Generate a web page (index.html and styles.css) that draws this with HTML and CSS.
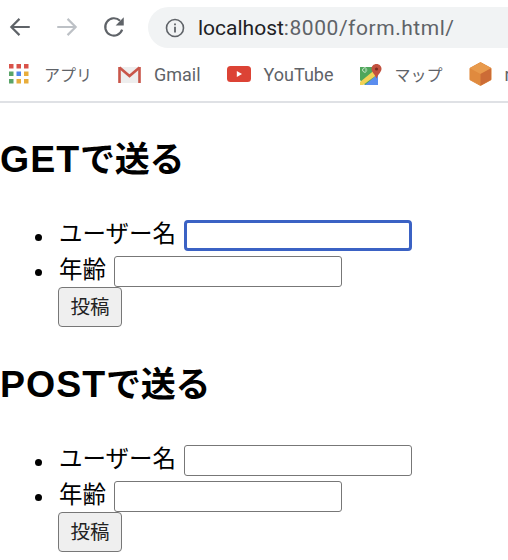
FILE: index.html
```html
<!DOCTYPE html>
<html lang="ja">
<head>
  <meta charset="UTF-8" />
  <title>form</title>
  <link rel="stylesheet" href="styles.css">
</head>
<body>
  <div class="browser-bar">
    <div class="nav-row">
      <svg class="nav-icon" viewBox="0 0 24 24"><path d="M21 12H4M11.500 4.500 4 12l7.500 7.500" fill="none" stroke="#5f6368" stroke-width="2"/></svg>
      <svg class="nav-icon" viewBox="0 0 24 24"><path d="M3 12h17M12.500 4.500 20 12l-7.500 7.500" fill="none" stroke="#bdc1c6" stroke-width="2"/></svg>
      <svg class="nav-icon" viewBox="0 0 24 24"><path d="M19.500 14.500A8 8 0 1 1 17.600 6.300" fill="none" stroke="#5f6368" stroke-width="2"/><path d="M21 3v7.500h-7.500z" fill="#5f6368"/></svg>
      <div class="address-bar">
        <svg class="info-icon" viewBox="0 0 20 20"><circle cx="10" cy="10" r="8.500" fill="none" stroke="#5f6368" stroke-width="1.600"/><path d="M9.100 5.500h1.800v1.800H9.100zM9.100 8.800h1.800v5.800H9.100z" fill="#5f6368"/></svg>
        <span class="host">localhost</span><span class="url-rest">:8000/form.html/</span>
      </div>
    </div>
    <div class="bookmarks">
      <div class="bookmark">
        <svg class="bm-icon apps" viewBox="0 0 22 20">
          <rect x="0" y="0" width="4.500" height="4.500" fill="#d9534a"/><rect x="7.500" y="0" width="4.500" height="4.500" fill="#d9534a"/><rect x="15" y="0" width="4.500" height="4.500" fill="#d9534a"/>
          <rect x="0" y="7.500" width="4.500" height="4.500" fill="#5aa469"/><rect x="7.500" y="7.500" width="4.500" height="4.500" fill="#4f86ec"/><rect x="15" y="7.500" width="4.500" height="4.500" fill="#e8ad3c"/>
          <rect x="0" y="15" width="4.500" height="4.500" fill="#5aa469"/><rect x="7.500" y="15" width="4.500" height="4.500" fill="#e8ad3c"/><rect x="15" y="15" width="4.500" height="4.500" fill="#e8ad3c"/>
        </svg>
        <span class="jp">アプリ</span>
      </div>
      <div class="bookmark">
        <svg class="bm-icon gmail" viewBox="0 0 23 17">
          <path d="M1 1h21v16H1z" fill="#eeeeee"/>
          <path d="M1.500 1.500 11.500 10l10-8.500" fill="none" stroke="#c9564a" stroke-width="2.600"/>
          <path d="M1.500 1v16M21.500 1v16" stroke="#c9564a" stroke-width="2.600"/>
        </svg>
        <span>Gmail</span>
      </div>
      <div class="bookmark">
        <svg class="bm-icon youtube" viewBox="0 0 24 16">
          <rect width="24" height="16" rx="3.500" fill="#dc4335"/>
          <path d="M9.800 5 15 8l-5.200 3z" fill="#fff"/>
        </svg>
        <span>YouTube</span>
      </div>
      <div class="bookmark">
        <svg class="bm-icon maps" viewBox="0 0 22 21">
          <path d="M0 3h18v18H0z" fill="#4fa65b"/>
          <path d="M5 21 18 10v11z" fill="#5b8def"/>
          <path d="M0 21V16L5 21z" fill="#e8eaed"/>
          <path d="M0 18 14 6.500l4 3.500L3 21H0z" fill="#f2d255"/>
          <path d="M16.500 0c3 0 5 2.200 5 4.800 0 3.300-3.300 5.200-5 9.700-1.700-4.500-5-6.400-5-9.700 0-2.600 2-4.800 5-4.800z" fill="#c2513f"/>
          <circle cx="16.500" cy="5" r="1.600" fill="#7c2d22"/>
          <path d="M6.500 7.400a2.200 2.200 0 1 1 0-2.800M5 6h2.300" fill="none" stroke="#e8f5e9" stroke-width=".8"/>
        </svg>
        <span class="jp">マップ</span>
      </div>
      <div class="bookmark">
        <svg class="bm-icon cube" viewBox="0 0 24 24">
          <path d="M12 0 23 6v12L12 24 1 18V6z" fill="#e08a3e" stroke="#e08a3e" stroke-linejoin="round"/>
          <path d="M12 0 23 6 12 12 1 6z" fill="#e89a4c"/>
          <path d="M12 12 23 6v12L12 24z" fill="#cc6c36"/>
        </svg>
        <span>r</span>
      </div>
    </div>
  </div>

  <div class="page">
    <h2>GET<span class="h2-kana">で送る</span></h2>
    <form>
      <ul>
        <li>ユーザー名 <input type="text" class="field focused"></li>
        <li>年齢 <input type="text" class="field"></li>
        <button type="button" class="submit">投稿</button>
      </ul>
    </form>

    <h2>POST<span class="h2-kana">で送る</span></h2>
    <form>
      <ul>
        <li>ユーザー名 <input type="text" class="field"></li>
        <li>年齢 <input type="text" class="field"></li>
        <button type="button" class="submit">投稿</button>
      </ul>
    </form>
  </div>
</body>
</html>
```

FILE: styles.css
```css
html, body {
  margin: 0;
  height: 100%;
  background: #fff;
  color: #000;
  overflow: hidden;
  font-family: "Liberation Sans", "Noto Sans CJK JP", sans-serif;
}

.browser-bar {
  height: 101px;
  border-bottom: 2px solid #dfe1e5;
  overflow: hidden;
}

.nav-row {
  display: flex;
  align-items: center;
  height: 54px;
  padding-left: 7px;
  gap: 21px;
}

.nav-icon {
  width: 26px;
  height: 26px;
  flex: none;
}

.address-bar {
  display: flex;
  align-items: center;
  flex: 1;
  height: 41px;
  padding-left: 17px;
  padding-top: 1px;
  box-sizing: border-box;
  background: #f1f3f4;
  border-radius: 21px 0 0 21px;
  font-family: Roboto, "Liberation Sans", sans-serif;
  font-size: 21px;
  white-space: nowrap;
}

.info-icon {
  width: 20px;
  height: 20px;
  margin-right: 13px;
}

.host {
  color: #202124;
}

.url-rest {
  color: #5f6368;
  letter-spacing: 0.550px;
}

.bookmarks {
  display: flex;
  align-items: center;
  height: 40px;
  padding-left: 9px;
  gap: 26px;
  font-size: 18px;
  color: #5f6368;
  white-space: nowrap;
  font-family: Roboto, "Noto Sans CJK JP", sans-serif;
}

.bookmark {
  display: flex;
  align-items: center;
  gap: 13px;
  flex: none;
}

.jp {
  font-size: 16px;
}

.bm-icon {
  flex: none;
}

.apps {
  width: 22px;
  height: 20px;
}

.gmail {
  width: 23px;
  height: 17px;
}

.youtube {
  width: 24px;
  height: 16px;
}

.maps {
  width: 22px;
  height: 21px;
}

.cube {
  width: 23px;
  height: 24px;
}

.page {
  font-size: 23.500px;
  font-family: "Liberation Sans", "Noto Sans CJK JP", sans-serif;
}

h2 {
  font-size: 37.500px;
  font-weight: bold;
  line-height: 42px;
  letter-spacing: 1px;
  margin: 0;
  padding: 35px 0 1px;
}

.h2-kana {
  font-size: 35px;
  letter-spacing: -0.300px;
}

ul {
  margin: 0 0 1px;
  padding: 35px 0 0 59px;
  list-style: none;
}

li {
  position: relative;
  height: 35.500px;
  line-height: 35.500px;
}

li::before {
  content: "";
  position: absolute;
  left: -24px;
  top: 16.500px;
  width: 7px;
  height: 7px;
  border-radius: 50%;
  background: #000;
}

.field {
  width: 228px;
  height: 31px;
  margin-left: 1px;
  box-sizing: border-box;
  border: 1.500px solid #777;
  border-radius: 3px;
  background: #fff;
  padding: 0;
  vertical-align: middle;
}

.focused {
  border: 3px solid #3b62c4;
  border-radius: 4px;
  outline: none;
}

.submit {
  display: block;
  width: 64px;
  height: 40px;
  margin: -1px 0 0 -1px;
  padding: 0 0 3px;
  font-size: 19.500px;
  font-family: inherit;
  color: #222;
  background: #efefef;
  border: 1.500px solid #777;
  border-radius: 4px;
}
```
